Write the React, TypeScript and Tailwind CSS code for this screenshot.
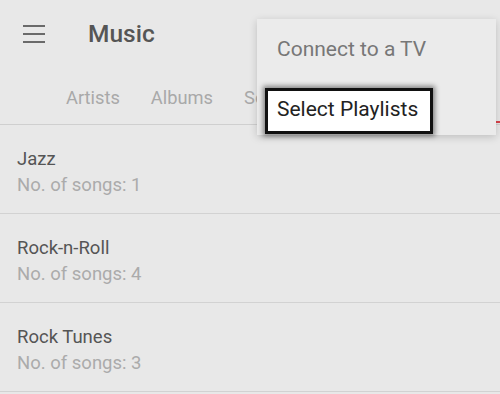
import React from "react";

const rows = [
  { title: "Jazz", count: 1 },
  { title: "Rock-n-Roll", count: 4 },
  { title: "Rock Tunes", count: 3 },
];

export default function App() {
  return (
    <div
      className="relative w-[500px] h-[394px] overflow-hidden bg-[#e8e8e8]"
      style={{ fontFamily: "Roboto, 'Liberation Sans', sans-serif" }}
    >
      <div className="flex h-[68px] items-center">
        <div className="ml-[23px] flex w-[22px] flex-col gap-[6px]">
          <div className="h-[2px] bg-[#6a6a6a]" />
          <div className="h-[2px] bg-[#6a6a6a]" />
          <div className="h-[2px] bg-[#6a6a6a]" />
        </div>
        <div className="ml-[43px] text-[24.5px] font-medium text-[#555555]">Music</div>
      </div>
      <div className="relative flex h-[57px] items-center gap-[31px] border-b border-[#cfcfcf] pl-[66px] pt-[3px] text-[18.3px] text-[#a9a9a9]">
        <span>Artists</span>
        <span>Albums</span>
        <span>Songs</span>
        <div className="absolute bottom-[1px] right-0 h-[2px] w-[90px] bg-[#d9434b]" />
      </div>
      {rows.map((r) => (
        <div key={r.title} className="flex h-[89px] flex-col border-b border-[#d2d2d2] pl-[17px] pt-[22px]">
          <div className="text-[18.5px] leading-[24px] text-[#555555]">{r.title}</div>
          <div className="mt-[2px] text-[18.5px] leading-[24px] text-[#ababab]">No. of songs: {r.count}</div>
        </div>
      ))}

      <div className="absolute left-[257px] top-[19px] h-[116px] w-[239px] bg-[#ebebeb] shadow-[0_2px_8px_rgba(0,0,0,0.18)]">
        <div className="pl-[20px] pt-[17px] text-[21px] leading-[26px] text-[#777777]">Connect to a TV</div>
        <div className="absolute left-[8px] top-[69px] h-[46px] w-[168px] border-[3px] border-[#111111] bg-white pl-[9px] pt-[5px] text-[21px] leading-[26px] text-[#222222] shadow-[0_0_5px_2px_rgba(0,0,0,0.45)]">
          Select Playlists
        </div>
      </div>
    </div>
  );
}
